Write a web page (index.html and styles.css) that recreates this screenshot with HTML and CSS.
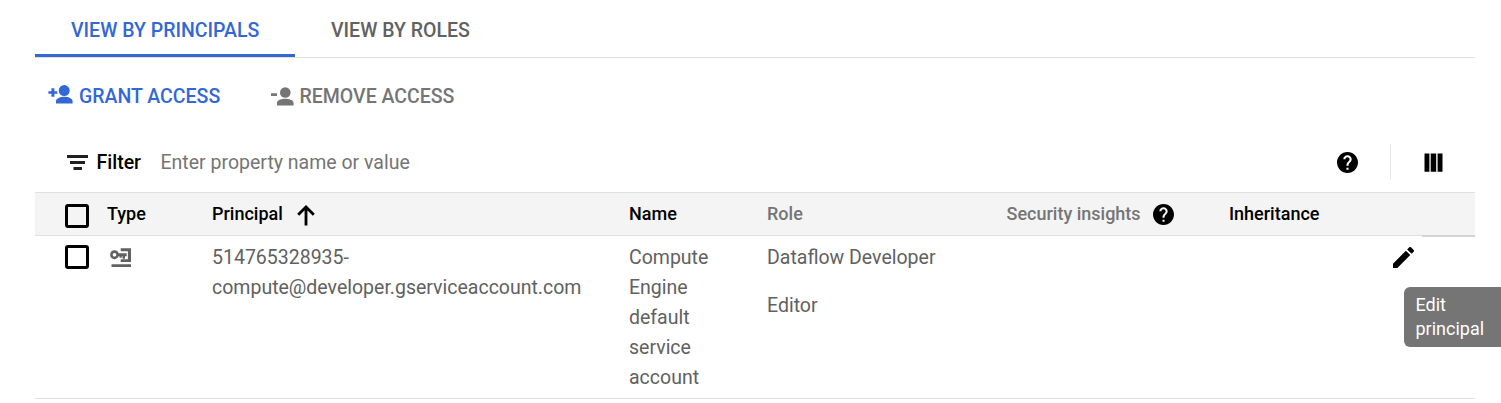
FILE: index.html
```html
<!DOCTYPE html>
<html lang="en">
<head>
<meta charset="utf-8">
<title>IAM permissions</title>
<link rel="stylesheet" href="styles.css">
</head>
<body>
<main class="panel">
  <nav class="tabs">
    <a class="tab tab-active">VIEW BY PRINCIPALS</a>
    <a class="tab">VIEW BY ROLES</a>
  </nav>
  <div class="actions">
    <button class="action action-grant">
      <svg class="person" width="25" height="19" viewBox="0 0 25 19" fill="currentColor"><circle cx="16.2" cy="5.6" r="5.5"/><path d="M8 18.6v-2.3c0-3.3 5-4.5 8.3-4.5s8.3 1.2 8.3 4.5v2.3zM3.4 3.3h3v3h3v2.5h-3v3h-3v-3h-3V6.300h3z"/></svg>
      <span class="label">GRANT ACCESS</span>
    </button>
    <button class="action action-remove">
      <svg class="person" width="24" height="19" viewBox="0 0 24 19" fill="currentColor"><circle cx="15.300" cy="5.500" r="5.300"/><path d="M7 18.500v-2.300c0-3.200 5-4.400 8.300-4.400s8.300 1.200 8.300 4.400v2.300zM1 6.300h6v2.700H1z"/></svg>
      <span class="label">REMOVE ACCESS</span>
    </button>
  </div>
  <div class="filter">
    <svg class="filter-icon" width="22" height="16" viewBox="0 0 22 16" fill="#212121"><path d="M0 0h21v3H0zM3 6h15v3H3zM6.500 12h8.500v3H6.500z"/></svg>
    <span class="filter-name">Filter</span>
    <span class="filter-hint">Enter property name or value</span>
    <svg class="help" width="21" height="21" viewBox="2 2 20 20"><path d="M12 2C6.480 2 2 6.480 2 12s4.480 10 10 10 10-4.480 10-10S17.520 2 12 2zm1 17h-2v-2h2v2zm2.070-7.750l-.9.920C13.450 12.900 13 13.500 13 15h-2v-.5c0-1.100.450-2.100 1.170-2.830l1.240-1.260c.370-.360.590-.860.590-1.410 0-1.100-.9-2-2-2s-2 .9-2 2H8c0-2.210 1.790-4 4-4s4 1.790 4 4c0 .880-.360 1.680-.930 2.250z"/></svg>
    <span class="divider"></span>
    <svg class="columns" width="19" height="19" viewBox="0 0 19 19"><path d="M.5.400h4.900v18.300H.5zM6.700.400h5.500v18.300H6.700zM13.600.400h4.900v18.300h-4.900z"/></svg>
  </div>
  <section class="table">
    <div class="row head">
      <span class="checkbox"></span>
      <span>Type</span>
      <span class="sorted">Principal <svg width="18" height="21" viewBox="0 0 18 21" fill="none" stroke="#000" stroke-width="2.800"><path d="M9 20.500V2.500M1.200 9.800L9 2l7.800 7.800"/></svg></span>
      <span>Name</span>
      <span class="muted">Role</span>
      <span class="insights muted">Security insights <svg width="21" height="21" viewBox="2 2 20 20" fill="#000"><path d="M12 2C6.480 2 2 6.480 2 12s4.480 10 10 10 10-4.480 10-10S17.520 2 12 2zm1 17h-2v-2h2v2zm2.070-7.750l-.9.920C13.450 12.900 13 13.500 13 15h-2v-.5c0-1.100.450-2.100 1.170-2.830l1.240-1.260c.370-.360.590-.860.590-1.410 0-1.100-.9-2-2-2s-2 .9-2 2H8c0-2.210 1.790-4 4-4s4 1.790 4 4c0 .880-.360 1.680-.930 2.250z"/></svg></span>
      <span>Inheritance</span>
    </div>
    <div class="row body">
      <span class="checkbox"></span>
      <span class="account"><svg width="22" height="20" viewBox="0 0 22 20" fill="#616161"><path d="M1.500 16.300H21V19H1.500zM10.700.300H21V14H10.700v-2.800h7.200V3.300h-7.200z"/><path fill-rule="evenodd" d="M4.500 2.300a4.400 4.400 0 0 1 4.200 3h8v3h-1.700v2.400h-2.500V8.300h-.8v1.500H9.500V8.300h-.8a4.400 4.400 0 1 1-4.200-6zm0 2.600a1.800 1.800 0 1 0 0 3.700 1.800 1.800 0 0 0 0-3.700z"/></svg></span>
      <span>514765328935-<br>compute@developer.gserviceaccount.com</span>
      <span class="name">Compute Engine default service account</span>
      <span class="roles"><span>Dataflow Developer</span><span>Editor</span></span>
      <span></span>
      <span></span>
      <span class="edit">
        <svg width="21" height="21" viewBox="3 3 18 18"><path d="M3 17.250V21h3.750L17.810 9.940l-3.750-3.750L3 17.250zM20.710 7.040c.390-.390.390-1.020 0-1.410l-2.340-2.340c-.390-.390-1.020-.390-1.410 0l-1.830 1.830 3.750 3.750 1.830-1.830z"/></svg>
        <span class="tooltip">Edit<br>principal</span>
      </span>
    </div>
  </section>
</main>
</body>
</html>
```
FILE: styles.css
```css
* { box-sizing: border-box; }
html { overflow: hidden; }
body { margin: 0; background: #fff; color: #616161; font: 19.5px/30px Roboto, sans-serif; }
svg { display: block; flex: none; }
.panel { width: 1440px; margin-left: 35px; }

.tabs { display: flex; height: 58px; border-bottom: 1px solid #e0e0e0; font-weight: 500; }
.tab { height: 57px; padding: 16px 36px 0; white-space: nowrap; }
.tab-active { width: 260px; color: #3367d6; border-bottom: 3px solid #3367d6; }

.actions { display: flex; height: 74px; padding: 24px 13px 0; }
.action { display: flex; align-items: flex-start; height: 30px; padding: 0; border: 0; background: none; font: inherit; font-weight: 500; white-space: nowrap; }
.action-grant { width: 221.5px; color: #3367d6; }
.action-grant .person { margin: 3px 6px 0 0; }
.action-remove { color: #757575; }
.action-remove .person { margin: 5px 6px 0 0; }

.filter { display: flex; align-items: center; height: 60px; padding: 0 32px; white-space: nowrap; }
.filter-icon { margin-top: 2px; }
.filter-name { width: 64px; margin-left: 7.5px; padding-top: 2px; color: #000; font-weight: 500; }
.filter-hint { flex: 1; padding-top: 2px; color: #757575; }
.divider { width: 1px; height: 36px; margin: 0 33px 0 32px; background: #e8e8e8; }

.row { display: grid; grid-template-columns: 42px 105px 417px 138px 239.5px 222.5px 164px 82px; padding-left: 30px; }
.head { position: relative; height: 44px; border-top: 1px solid #e0e0e0; border-bottom: 1px solid #e0e0e0; background: #f4f4f4; color: #000; font-size: 18px; font-weight: 500; line-height: 42px; white-space: nowrap; }
.body { position: relative; height: 163px; padding-top: 7px; border-bottom: 1px solid #e0e0e0; }
.checkbox { width: 24px; height: 24px; margin-top: 2px; border: 3px solid #000; border-radius: 3px; }
.head .checkbox { margin-top: 11px; }
.muted { color: #757575; }
.sorted, .insights { display: flex; }
.sorted svg { margin: 12px 0 0 14.5px; }
.insights svg { margin: 11px 0 0 12.500px; }
.account svg { margin: 5px 0 0 3px; }
.name { width: 90px; }
.roles { display: flex; flex-direction: column; gap: 18px; white-space: nowrap; }
.edit svg { margin-top: 4px; }
.head::after, .body::after { content: ""; position: absolute; right: 0; bottom: -2px; width: 53px; height: 2px; background: #d4d4d4; z-index: 1; }
.body::after { background: #e0e0e0; }
.tooltip { position: absolute; left: 1369px; top: 51px; width: 110px; height: 60px; padding: 6px 11.5px; border-radius: 6px; background: #757575; color: #fff; font-size: 18px; line-height: 24px; }
```
